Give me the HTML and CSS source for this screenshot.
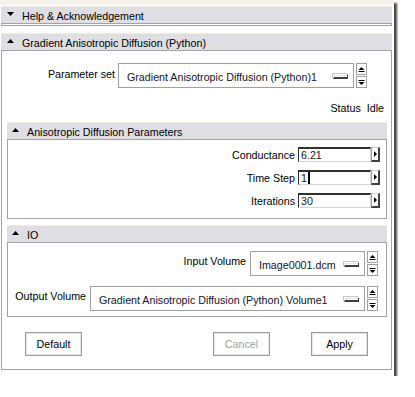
FILE: index.html
```html
<!DOCTYPE html>
<html>
<head>
<meta charset="utf-8">
<link rel="stylesheet" href="styles.css">
</head>
<body>
<div class="window">
  <div class="topstrip"></div>

  <div class="section help">
    <div class="hdr"><svg class="tri" viewBox="0 0 7 4"><path d="M0 0H7L3.5 4Z"/></svg><span>Help &amp; Acknowledgement</span></div>
    <div class="frame collapsed"></div>
  </div>

  <div class="section main">
    <div class="hdr"><svg class="tri" viewBox="0 0 7 4"><path d="M0 4H7L3.5 0Z"/></svg><span>Gradient Anisotropic Diffusion (Python)</span></div>
    <div class="frame mainframe">
      <div class="combo-row ps">
        <label class="lbl ps-lbl">Parameter set</label>
        <div class="combo ps-combo"><span class="ctext">Gradient Anisotropic Diffusion (Python)1</span><span class="cind"></span></div>
        <div class="spin">
          <div class="sbtn"><svg viewBox="0 0 7 5"><path d="M0.5 3H6.5L3.5 0Z"/><rect x="0.5" y="4" width="6" height="1"/></svg></div>
          <div class="sbtn"><svg viewBox="0 0 7 5"><rect x="0.5" y="0" width="6" height="1"/><path d="M0.5 2H6.5L3.5 5Z"/></svg></div>
        </div>
      </div>
      <div class="status"><span>Status</span><span>Idle</span></div>

      <div class="section sub aniso">
        <div class="hdr"><svg class="tri" viewBox="0 0 7 4"><path d="M0 4H7L3.5 0Z"/></svg><span>Anisotropic Diffusion Parameters</span></div>
        <div class="frame subframe params">
          <div class="prow">
            <label class="plbl">Conductance</label>
            <div class="field">6.21</div>
            <div class="abtn"><svg viewBox="0 0 3 6"><path d="M0 0L3 3L0 6Z"/></svg></div>
          </div>
          <div class="prow">
            <label class="plbl">Time Step</label>
            <div class="field">1<span class="caret"></span></div>
            <div class="abtn"><svg viewBox="0 0 3 6"><path d="M0 0L3 3L0 6Z"/></svg></div>
          </div>
          <div class="prow">
            <label class="plbl">Iterations</label>
            <div class="field">30</div>
            <div class="abtn"><svg viewBox="0 0 3 6"><path d="M0 0L3 3L0 6Z"/></svg></div>
          </div>
        </div>
      </div>

      <div class="section sub io">
        <div class="hdr"><svg class="tri" viewBox="0 0 7 4"><path d="M0 4H7L3.5 0Z"/></svg><span>IO</span></div>
        <div class="frame subframe iof">
          <div class="combo-row in">
            <label class="lbl in-lbl">Input Volume</label>
            <div class="combo in-combo"><span class="ctext">Image0001.dcm</span><span class="cind"></span></div>
            <div class="spin">
              <div class="sbtn"><svg viewBox="0 0 7 5"><path d="M0.5 3H6.5L3.5 0Z"/><rect x="0.5" y="4" width="6" height="1"/></svg></div>
              <div class="sbtn"><svg viewBox="0 0 7 5"><rect x="0.5" y="0" width="6" height="1"/><path d="M0.5 2H6.5L3.5 5Z"/></svg></div>
            </div>
          </div>
          <div class="combo-row out">
            <label class="lbl out-lbl">Output Volume</label>
            <div class="combo out-combo"><span class="ctext">Gradient Anisotropic Diffusion (Python) Volume1</span><span class="cind"></span></div>
            <div class="spin">
              <div class="sbtn"><svg viewBox="0 0 7 5"><path d="M0.5 3H6.5L3.5 0Z"/><rect x="0.5" y="4" width="6" height="1"/></svg></div>
              <div class="sbtn"><svg viewBox="0 0 7 5"><rect x="0.5" y="0" width="6" height="1"/><path d="M0.5 2H6.5L3.5 5Z"/></svg></div>
            </div>
          </div>
        </div>
      </div>

      <div class="buttons">
        <button class="btn b-default">Default</button>
        <button class="btn b-cancel" disabled>Cancel</button>
        <button class="btn b-apply">Apply</button>
      </div>
    </div>
  </div>
</div>
</body>
</html>
```

FILE: styles.css
```css
* { box-sizing: border-box; }

body {
  margin: 0;
  background: #fff;
  font-family: "Liberation Sans", Arial, sans-serif;
  font-size: 10.7px;
  color: #000;
}

.window {
  width: 394px;
  height: 376px;
  background: #fff;
  padding: 0 2px 0 1px;
  box-shadow: 3px 3px 2px rgba(0, 0, 0, 0.72);
}

.topstrip {
  height: 5px;
  margin: 0 -2px 1px -1px;
  background: #f6f4ea;
}

.hdr {
  height: 17px;
  background: #dedee3;
  border-top: 1px solid #efece0;
  display: flex;
  align-items: center;
  padding-left: 6px;
}

.hdr span { line-height: 16px; padding-top: 1px; }

.tri {
  width: 7px;
  height: 4px;
  margin-right: 8px;
  margin-top: -2px;
  fill: #000;
}

.frame {
  border: 1px solid #a3a3a3;
  background: #fff;
}

.collapsed {
  height: 3px;
  margin-bottom: 7px;
}

.mainframe {
  height: 320px;
  padding: 12px 4px 0 5px;
}

/* combo rows */
.combo-row {
  display: flex;
  align-items: flex-start;
  height: 25px;
}

.lbl {
  text-align: right;
  padding-top: 5px;
  white-space: nowrap;
}

.ps-lbl { width: 108px; margin-right: 3px; }

.combo {
  height: 25px;
  border: 1px solid #a0a0a0;
  background: #fff;
  display: flex;
  align-items: center;
  padding: 3px 5px 0 8px;
  color: #14142a;
}

.ctext { flex: 1; white-space: nowrap; overflow: hidden; }

.cind {
  width: 15px;
  height: 5px;
  border: 1px solid #fff;
  border-right-color: #404040;
  border-bottom: 2px solid #404040;
  background: #fff;
  box-shadow: inset 1px 1px 0 #e8e8e8, -1px -1px 0 #c8c8c8;
  margin-top: -2px;
}

.ps-combo { width: 236px; }

.spin {
  display: flex;
  flex-direction: column;
  gap: 1px;
  margin-left: 2px;
}

.sbtn {
  width: 11px;
  height: 12px;
  border: 1px solid #a0a0a0;
  background: #fff;
  display: flex;
  align-items: center;
  justify-content: center;
}

.sbtn svg { width: 7px; height: 5px; fill: #000; }

.status {
  display: flex;
  justify-content: flex-end;
  gap: 6px;
  margin-top: 13px;
  height: 14px;
  padding-right: 3px;
  line-height: 14px;
}

.sub { margin-top: 7px; }
.sub .hdr { padding-left: 5px; }

.io { margin-top: 6px; }

.params {
  height: 80px;
  padding: 7px 6px 0 0;
  display: flex;
  flex-direction: column;
  gap: 8px;
}

.prow {
  display: flex;
  justify-content: flex-end;
  align-items: center;
  height: 15px;
}

.plbl { margin-right: 3px; }

.field {
  width: 73px;
  height: 15px;
  border-top: 2px solid #303030;
  border-left: 1px solid #303030;
  border-bottom: 1px solid #d4d4d4;
  border-right: 1px solid #d4d4d4;
  padding-left: 2px;
  line-height: 12px;
  color: #14142a;
  display: flex;
  align-items: center;
}

.caret {
  display: inline-block;
  width: 2px;
  height: 12px;
  background: #000;
  margin-left: 1px;
}

.abtn {
  width: 9px;
  height: 15px;
  background: #fff;
  border-top: 1px solid #d0d0d0;
  border-left: 1px solid #a0a0a0;
  border-right: 2px solid #404040;
  border-bottom: 2px solid #404040;
  display: flex;
  align-items: center;
  justify-content: center;
}

.abtn svg { width: 3px; height: 6px; fill: #000; }

.iof {
  height: 75px;
  padding: 8px 8px 0 0;
}

.iof .combo-row { justify-content: flex-end; }
.iof .lbl { padding-top: 4px; margin-right: 4px; }
.out { margin-top: 10px; }
.in-combo { width: 115px; }
.out-combo { width: 275px; }

.buttons {
  height: 24px;
  margin-top: 15px;
  display: flex;
}

.btn {
  height: 24px;
  width: 57px;
  border: 1px solid #9a9a9a;
  box-shadow: inset 0 0 0 1px #e6e6e6;
  background: #fff;
  font-family: "Liberation Sans", Arial, sans-serif;
  font-size: 10.7px;
  color: #000;
  padding: 0;
}

.b-default { margin-left: 18px; }
.b-cancel { margin-left: 131px; color: #a0a0a0; }
.b-apply { margin-left: 41px; }
```
